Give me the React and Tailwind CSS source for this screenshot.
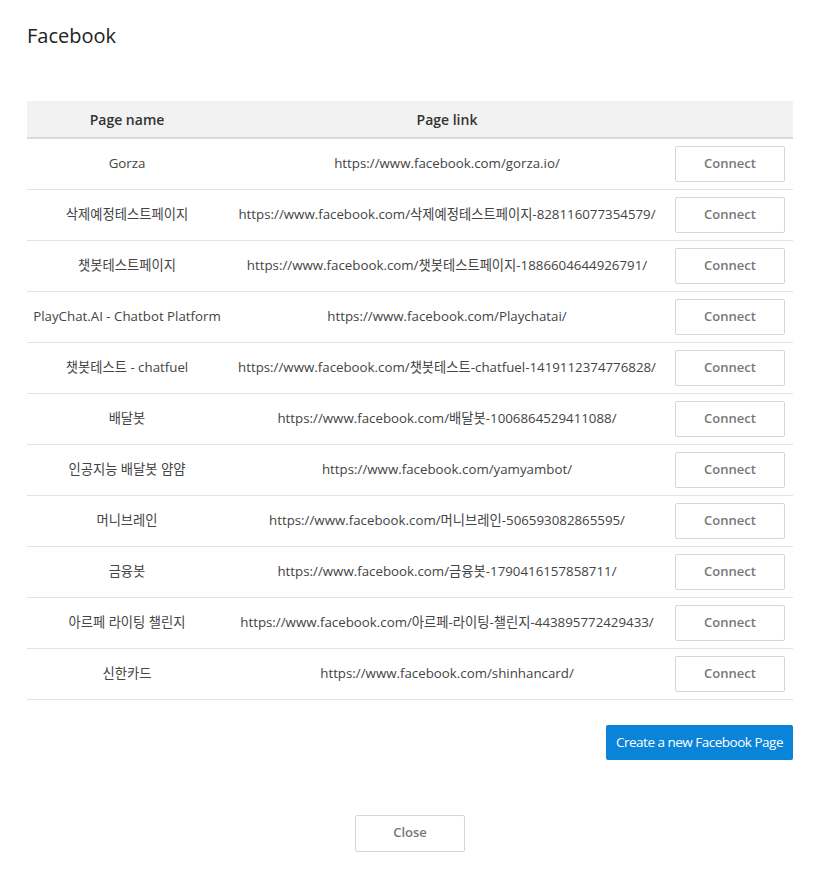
const pages = [
  { name: 'Gorza', link: 'https://www.facebook.com/gorza.io/' },
  { name: '삭제예정테스트페이지', link: 'https://www.facebook.com/삭제예정테스트페이지-828116077354579/' },
  { name: '챗봇테스트페이지', link: 'https://www.facebook.com/챗봇테스트페이지-1886604644926791/' },
  { name: 'PlayChat.AI - Chatbot Platform', link: 'https://www.facebook.com/Playchatai/' },
  { name: '챗봇테스트 - chatfuel', link: 'https://www.facebook.com/챗봇테스트-chatfuel-1419112374776828/' },
  { name: '배달봇', link: 'https://www.facebook.com/배달봇-1006864529411088/' },
  { name: '인공지능 배달봇 얌얌', link: 'https://www.facebook.com/yamyambot/' },
  { name: '머니브레인', link: 'https://www.facebook.com/머니브레인-506593082865595/' },
  { name: '금융봇', link: 'https://www.facebook.com/금융봇-1790416157858711/' },
  { name: '아르페 라이팅 챌린지', link: 'https://www.facebook.com/아르페-라이팅-챌린지-443895772429433/' },
  { name: '신한카드', link: 'https://www.facebook.com/shinhancard/' },
];

export default function App() {
  return (
    <div
      className="min-h-screen bg-white text-[#333] pl-[27px] pr-[22px]"
      style={{ fontFamily: '"Open Sans", "Noto Sans CJK KR", sans-serif' }}
    >
      <h1 className="pt-[22px] text-[20px] leading-[28px] font-normal text-[#222]">Facebook</h1>

      <table className="mt-[51px] w-[766px] table-fixed border-collapse text-[13.3px]">
        <colgroup>
          <col className="w-[200px]" />
          <col className="w-[440px]" />
          <col className="w-[126px]" />
        </colgroup>
        <thead>
          <tr className="bg-[#f2f2f2] border-b-2 border-[#dadada]">
            <th className="h-[37px] text-center font-semibold text-[14px] text-[#333]">Page name</th>
            <th className="h-[37px] text-center font-semibold text-[14px] text-[#333]">Page link</th>
            <th className="h-[37px]"></th>
          </tr>
        </thead>
        <tbody>
          {pages.map(p => (
            <tr key={p.link} className="border-b border-[#e3e3e3]">
              <td className="h-[51px] text-center whitespace-nowrap text-[#444]">{p.name}</td>
              <td className="h-[51px] text-center whitespace-nowrap text-[#444]">{p.link}</td>
              <td className="h-[51px] px-2">
                <button className="w-[110px] h-[36px] border border-[#d6d6d6] rounded-[2px] bg-white text-[#777] font-semibold text-[13px]">
                  Connect
                </button>
              </td>
            </tr>
          ))}
        </tbody>
      </table>

      <div className="w-[766px] flex justify-end mt-[25px]">
        <button className="h-[35px] px-[10px] bg-[#0a84d8] rounded-[2px] text-white text-[13.5px] tracking-[-0.5px]">
          Create a new Facebook Page
        </button>
      </div>

      <div className="w-[766px] flex justify-center mt-[55px]">
        <button className="w-[110px] h-[37px] border border-[#d6d6d6] rounded-[2px] bg-white text-[#777] font-semibold text-[13px]">
          Close
        </button>
      </div>
    </div>
  );
}
